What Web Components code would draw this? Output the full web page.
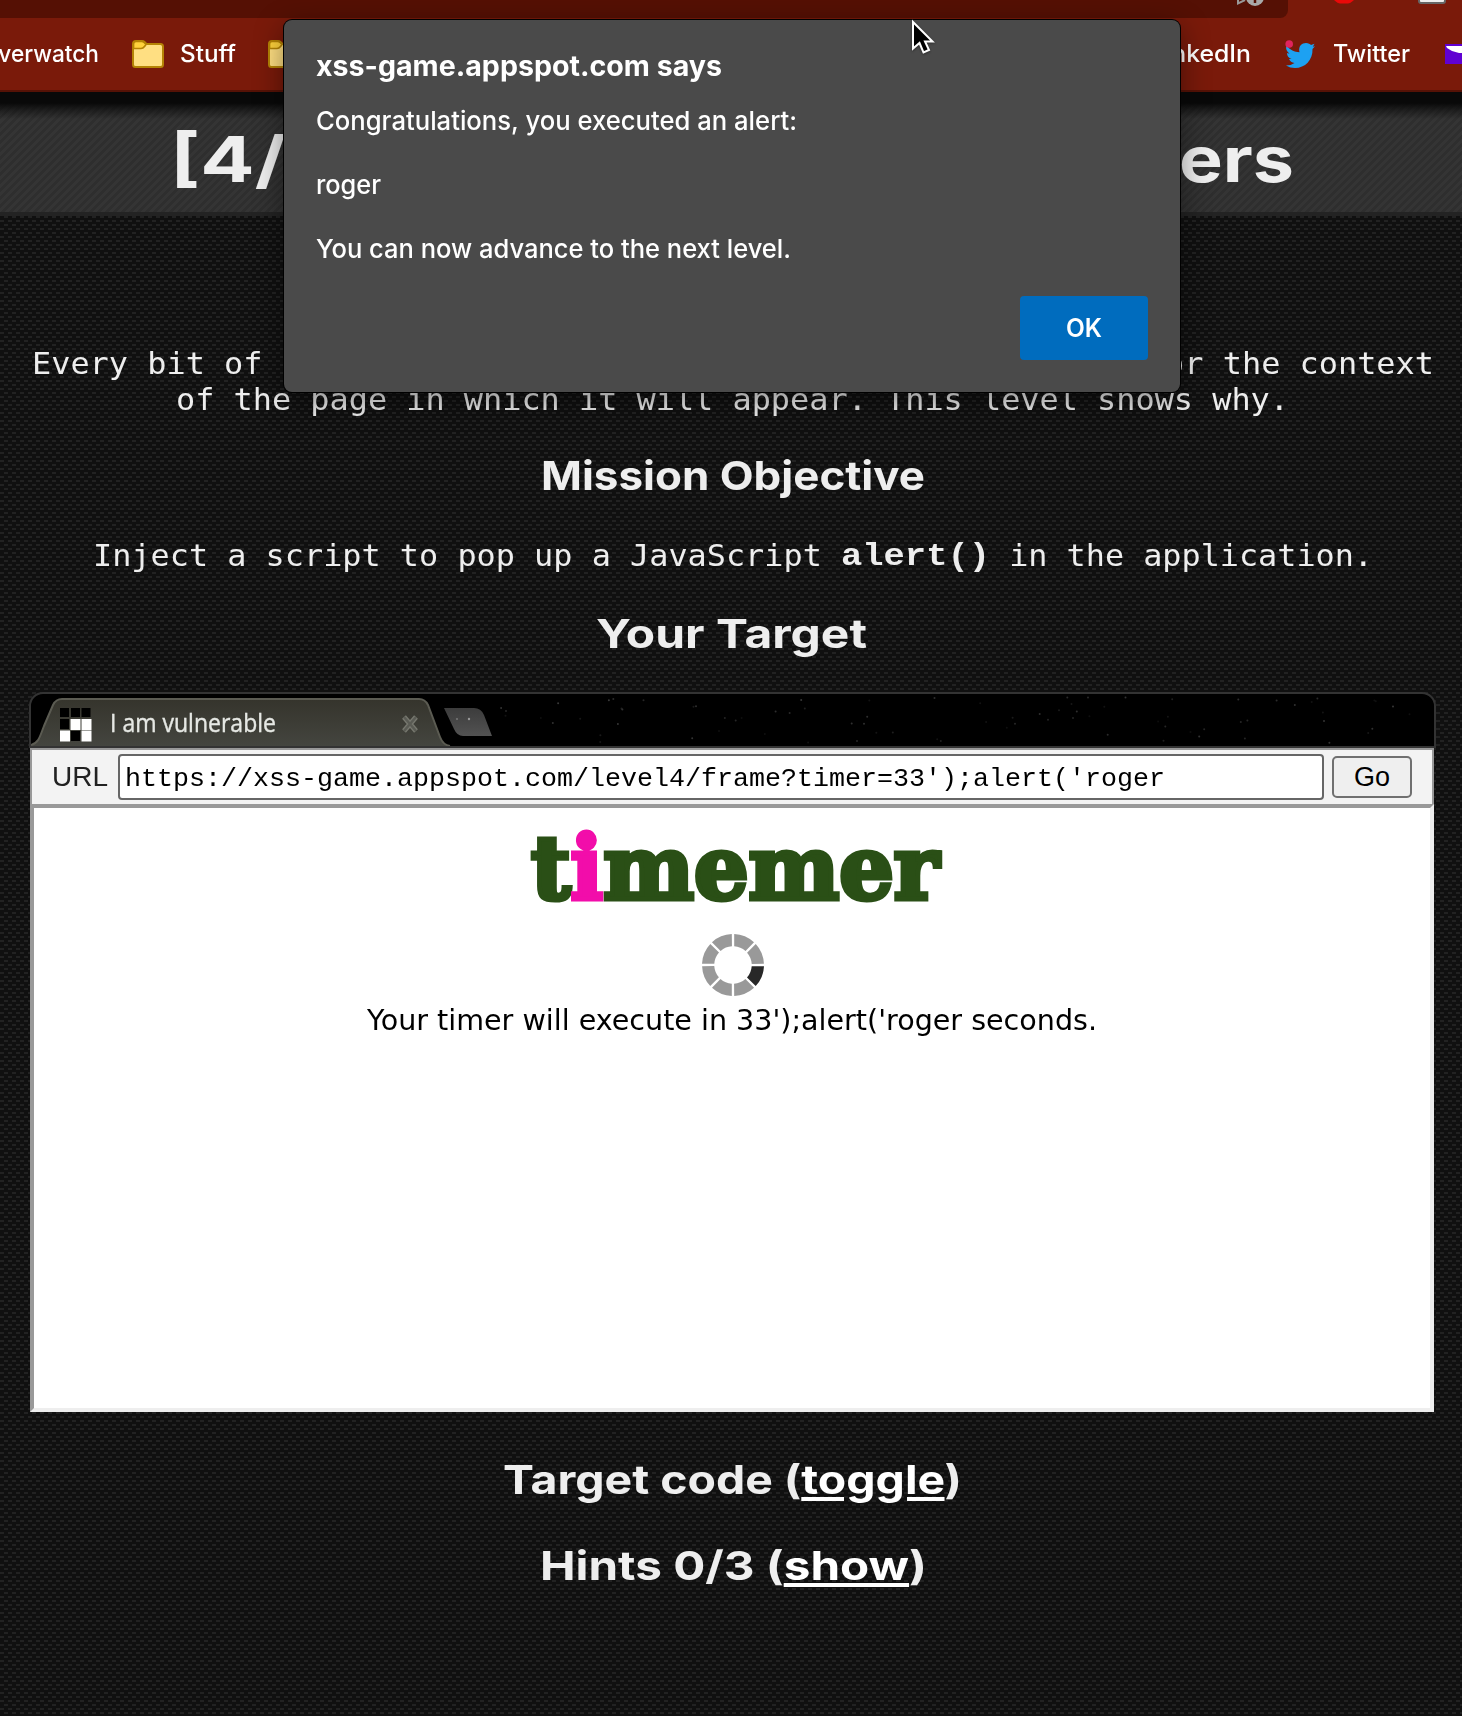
<!DOCTYPE html>
<html lang="en">
<head>
<meta charset="utf-8">
<title>XSS game</title>
<style>
html,body{margin:0;height:100%;overflow:hidden;background:#111}
</style>
</head>
<body>
<game-page></game-page>
<script>
class BaseElement extends HTMLElement{
  constructor(){super();this.attachShadow({mode:'open'}).innerHTML=this.render();}
}

/* A single line of text stretched to a given width. */
customElements.define('fit-text',class extends BaseElement{
  render(){return `<style>
    :host{display:block;flex:none;white-space:pre}
    span{display:inline-block;transform-origin:0 50%}
    ::slotted(a){color:#fff;text-decoration:underline;text-decoration-thickness:4px;text-underline-offset:3px}
    ::slotted(i){font-style:normal;color:#f20daa}
  </style><span><slot></slot></span>`;}
  connectedCallback(){
    const w=+this.getAttribute('width'),s=this.shadowRoot.querySelector('span');
    this.style.width=w+'px';
    s.style.transform=`scaleX(${w/s.getBoundingClientRect().width})`;
  }
});

customElements.define('folder-icon',class extends BaseElement{
  render(){return `<style>:host{display:block;flex:none;width:32px;height:28px}svg{display:block}</style>
  <svg width="32" height="28" viewBox="0 0 32 28"><path d="M1 5V24.5Q1 27 3.5 27H28.500Q31 27 31 24.500V6.500Q31 4 28.500 4H14.500L12.500 2Q11.500 1 10 1H4Q1 1 1 4Z" fill="#ffdf82" stroke="#b58305" stroke-width="2"/><path d="M1.500 8.500V4Q1.500 1.500 4 1.500H10Q12 1.500 14 4.500L12.500 6.500Q11 8.500 9 8.500Z" fill="#ffd23c" stroke="#b58305" stroke-width="1.700"/></svg>`;}
});

customElements.define('browser-toolbar',class extends BaseElement{
  render(){return `<style>
    :host{display:block;height:90px;background:#7a1a0a;border-bottom:2px solid #561206;overflow:hidden;font:500 24px/44px Inter,sans-serif;color:#fff}
    .top{display:flex;height:18px;overflow:hidden}
    .omni{width:1288px;height:18px;background:#551004;border-radius:0 0 8px 0;display:flex;justify-content:flex-end;box-sizing:border-box;padding-right:22px}
    .top svg{display:block;flex:none}
    .marks{display:flex;align-items:center;height:72px}
    .row{display:flex;align-items:center}
    .cut{display:flex;justify-content:flex-end;width:99px;overflow:hidden}
    .marks{padding-left:0}
  </style>
  <div class="top"><div class="omni"><svg width="30" height="8" viewBox="0 0 30 8"><path d="M2 0V3.500L9 0" fill="none" stroke="#999" stroke-width="2"/><circle cx="19" cy="-3" r="9" fill="#a9a9a9"/><path d="M19-2V3" stroke="#551004" stroke-width="2.500"/></svg></div>
   <svg width="174" height="8" viewBox="0 0 174 8"><path d="M46 0Q50 3.500 52 3.500H60Q62 3.500 66 0Z" fill="#ea0909"/><path d="M131-4V1Q131 3 133 3H155Q157 3 157 1V-4Z" fill="#eee" stroke="#666" stroke-width="2"/></svg></div>
  <div class="marks">
    <fit-text width="118" style="margin-left:-19px">Overwatch</fit-text>
    <folder-icon style="margin-left:33px"></folder-icon>
    <fit-text width="56" style="margin-left:16px">Stuff</fit-text>
    <folder-icon style="margin-left:32px"></folder-icon>
    <div class="row" style="margin-left:851px"><fit-text width="100">LinkedIn</fit-text>
    <svg style="margin-left:34px;display:block" width="30" height="29" viewBox="0 0 30 29"><path d="M1.500 5.500C5 10 9.500 12 14.500 12.200C13 6 17 3 21 3C23.500 3 25 4 26 5L29.500 3.800L27.800 6.800L30 6.300L27.500 9C28 20 20 28 10 28Q5 28 1 25.500Q6 25.500 9.500 23Q5.500 22.500 4 19H6.500Q2 17.500 2 13L4.500 13.700Q0 10 1.500 5.500Z" fill="#1da1f2"/><circle cx="4.200" cy="4" r="3.800" fill="#e0245e"/></svg>
    <fit-text width="77" style="margin-left:18px">Twitter</fit-text>
    <svg style="margin-left:35px;display:block" width="24" height="20" viewBox="0 0 24 20"><path fill="#6001d2" d="M0 0H24V20H0Z"/><path fill="#fff" d="M1 2H24V9H14L7 7L2 4Z"/></svg></div>
  </div>`;}
  connectedCallback(){
    this.shadowRoot.querySelector('.marks').style.cssText='box-sizing:border-box';
  }
});

customElements.define('level-banner',class extends BaseElement{
  render(){return `<style>
    :host{display:flex;justify-content:space-between;box-sizing:border-box;height:124px;border-bottom:4px solid #232323;padding:7px 168px 0 170px;
     background:linear-gradient(#090909 0,#090909 11px,rgba(9,9,9,.5) 18px,transparent 27px),repeating-linear-gradient(135deg,#2e2e2e 0 2.828px,#343434 2.828px 5.657px);
     font:700 63px/120px Inter,sans-serif;color:#eee}
  </style><slot></slot>`;}
});

customElements.define('section-heading',class extends BaseElement{
  render(){return `<style>:host{display:flex;justify-content:center;height:48px;font:700 40px/48px Inter,sans-serif;color:#eee}</style><slot></slot>`;}
});

customElements.define('mission-text',class extends BaseElement{
  render(){return `<style>:host{display:flex;flex-direction:column;align-items:center;padding-left:3px;font:31px/36px "DejaVu Sans Mono",monospace;color:#eee}</style><slot></slot>`;}
});

customElements.define('tab-strip',class extends BaseElement{
  constructor(){super();
    const sky=this.shadowRoot.querySelector('.sky');let seed=17,out='';
    const rnd=()=>(seed=(seed*16807)%2147483647)/2147483647;
    for(let i=0;i<80;i++){const x=470+rnd()*925,y=3+rnd()*46,o=.05+rnd()*.18;out+=`<circle cx="${x.toFixed(1)}" cy="${y.toFixed(1)}" r="1" fill="#fff" opacity="${o.toFixed(2)}"/>`;}
    sky.innerHTML=out;
  }
  render(){return `<style>
    :host{display:grid;box-sizing:border-box;width:1407px;height:56px;background:#000;border:2px solid #333;border-radius:14px 14px 0 0;overflow:hidden}
    svg,.label{grid-area:1/1;display:block}
    .label{padding:11px 0 0 79px;font:26px/34px "Open Sans",sans-serif;color:#e6e8e4;-webkit-text-stroke:.4px #e6e8e4}
  </style>
  <svg width="1403" height="52" viewBox="0 0 1403 52">
    <defs><linearGradient id="t" x2="0" y2="1"><stop stop-color="#35342c"/><stop offset="1" stop-color="#44453f"/></linearGradient><linearGradient id="n" x2="0" y2="1"><stop stop-color="#3c3c3c"/><stop offset="1" stop-color="#525252"/></linearGradient></defs>
    <g class="sky"></g>
    <path d="M0 51C8 49 9 42 13 32L22 11Q25 5 31 5H388Q394 5 397 11L409 43Q412 51 419 52H0Z" fill="url(#t)"/>
    <path d="M0 51C8 49 9 42 13 32L22 11Q25 5 31 5H388Q394 5 397 11L409 43Q412 51 419 52" fill="none" stroke="#5b5b52" stroke-width="2"/>
    <path d="M413 14H443Q450 14 453 21L461 42H432Q426 42 423 35Z" fill="url(#n)"/><circle cx="438" cy="25" r="1.200" fill="#999"/><circle cx="426" cy="25" r="1" fill="#777"/>
    <path fill="#000" d="M29 14h9v9h-9zM40 14h9v9h-9zM50.500 14h9v9h-9zM29 25h9v10h-9zM40 37h9v10h-9z"/>
    <path fill="#fff" d="M39.500 25h10v11h-10zM50.500 25h10v11h-10zM29 36.500h10v11h-10zM50.500 36.500h10v11h-10z"/>
    <path d="M373 23L385 37M385 23L373 37" stroke="#77786f" stroke-width="5"/><path d="M373 23L385 37M385 23L373 37" stroke="#5a5b54" stroke-width="2.500"/>
  </svg>
  <div class="label"><fit-text width="166"><slot></slot></fit-text></div>`;}
});

customElements.define('url-bar',class extends BaseElement{
  render(){return `<style>
    :host{display:flex;box-sizing:border-box;width:1404px;height:56px;margin-left:1px;border:2px solid #999;border-bottom:0;background:#f3f3f3;padding:4px 19px 4px 20px;font:28px/45px "Liberation Sans",sans-serif;color:#222}
    .field{box-sizing:border-box;width:1206px;height:46px;border:2px solid #666;border-radius:4px;background:#fff;color:#000;font:26.667px/46px "Liberation Mono",monospace;padding-left:5px;margin-left:10px}
    button{box-sizing:border-box;width:80px;height:42px;margin:2px 0 0 8px;border:2px solid #707070;border-radius:5px;background:#efefef;padding:0;font:27px/36px "Liberation Sans",sans-serif;color:#000}
  </style><fit-text width="56">URL</fit-text><div class="field"><fit-text width="1040"><slot></slot></fit-text></div><button>Go</button>`;}
});

customElements.define('busy-spinner',class extends BaseElement{
  render(){
    let s='';for(let i=0;i<8;i++)s+=`<path transform="rotate(${i*45})" d="M18.700 1.200H31A31 31 0 0 1 22.700 21L14 12.500A19 19 0 0 0 18.700 1.200Z" fill="${i?'#999':'#282828'}"/>`;
    return `<style>:host{display:block;width:62px;height:62px}svg{display:block}</style><svg width="62" height="62" viewBox="-31 -31 62 62">${s}</svg>`;}
});

customElements.define('timer-frame',class extends BaseElement{
  render(){return `<style>
    :host{display:flex;flex-direction:column;align-items:center;box-sizing:border-box;width:1404px;height:608px;margin-left:1px;border:4px solid #999;border-right-color:#eee;border-bottom-color:#eee;background:#fff;color:#000;font:28px/36px "DejaVu Sans",sans-serif}
    .logo{height:72px;margin:16px 0 0 6px;font:bold 88px/88px "DejaVu Serif",serif;color:#2a4f16;-webkit-text-stroke:5px currentColor}
    busy-spinner{margin:38px 0 7px 1px}
  </style><fit-text class="logo" width="408">t<i>i</i>memer</fit-text><busy-spinner></busy-spinner><fit-text width="730"><slot></slot></fit-text>`;}
});

customElements.define('alert-dialog',class extends BaseElement{
  render(){return `<style>
    :host{display:flex;flex-direction:column;box-sizing:border-box;position:absolute;left:284px;top:20px;width:896px;height:371.500px;background:#4a4a4a;border-radius:8px;box-shadow:0 0 0 1px #000,0 8px 30px rgba(0,0,0,.45);padding:28px 32px 31.500px;color:#fff;font:450 26px/32px Inter,sans-serif}
    .title{font-weight:700;font-size:28px;line-height:36px;margin-bottom:21px}
    .body{display:flex;flex-direction:column;gap:32px}
    button{align-self:flex-end;margin-top:auto;border:0;border-radius:4px;width:128px;height:64px;background:#006cbe;color:#fff;font:600 25px/64px Inter,sans-serif;padding:0;display:flex;justify-content:center}
  </style><fit-text class="title" width="406">xss-game.appspot.com says</fit-text>
  <div class="body"><fit-text width="481">Congratulations, you executed an alert:</fit-text><fit-text width="65">roger</fit-text><fit-text width="475">You can now advance to the next level.</fit-text></div>
  <button><fit-text width="36">OK</fit-text></button>`;}
});

customElements.define('mouse-pointer',class extends BaseElement{
  render(){return `<style>:host{position:absolute;left:910px;top:18px;display:block}svg{display:block;filter:drop-shadow(0 1px 1px #0006)}</style>
  <svg width="26" height="38" viewBox="0 0 26 38"><path d="M3 4V30.500L9.500 25L13.500 34.500L19 32L15 23.500H22.500Z" fill="#000" stroke="#fff" stroke-width="2"/></svg>`;}
});

customElements.define('game-page',class extends BaseElement{
  render(){return `<style>
    :host{display:block;position:relative;width:1462px;height:1716px;overflow:hidden}
    .weave{height:1716px;background:conic-gradient(from 90deg at 4px 2px,transparent 270deg,#222 0) 0 0/8px 8px,conic-gradient(from 90deg at 4px 2px,transparent 270deg,#222 0) 4px 4px/8px 8px,#101010}
    .target{margin:34px 0 0 29px}
    .line{display:flex}
    .code{font:bold 32px/40px "Liberation Mono",monospace;height:36px}
  </style><div class="weave">
  <browser-toolbar></browser-toolbar>
  <level-banner><fit-text width="116">[4/</fit-text><fit-text width="115">ers</fit-text></level-banner>
  <mission-text style="margin-top:129px"><fit-text width="1402">Every bit of user-supplied data must be correctly escaped for the context</fit-text><fit-text width="1113">of the page in which it will appear. This level shows why.</fit-text></mission-text>
  <section-heading style="margin-top:35px;padding-left:3px"><fit-text width="384">Mission Objective</fit-text></section-heading>
  <mission-text style="margin-top:37px"><div class="line"><fit-text width="748">Inject a script to pop up a JavaScript </fit-text><fit-text width="149" class="code">alert()</fit-text><fit-text width="383"> in the application.</fit-text></div></mission-text>
  <section-heading style="margin-top:37px"><fit-text width="271">Your Target</fit-text></section-heading>
  <div class="target"><tab-strip>I am vulnerable</tab-strip>
  <url-bar>https://xss-game.appspot.com/level4/frame?timer=33');alert('roger</url-bar>
  <timer-frame>Your timer will execute in 33');alert('roger seconds.</timer-frame></div>
  <section-heading style="margin-top:44px;padding-left:3px"><fit-text width="459">Target code (<a>toggle</a>)</fit-text></section-heading>
  <section-heading style="margin-top:38px;padding-left:4px"><fit-text width="387">Hints 0/3 (<a>show</a>)</fit-text></section-heading>
  </div><alert-dialog></alert-dialog><mouse-pointer></mouse-pointer>`;}
});
</script>
</body>
</html>
